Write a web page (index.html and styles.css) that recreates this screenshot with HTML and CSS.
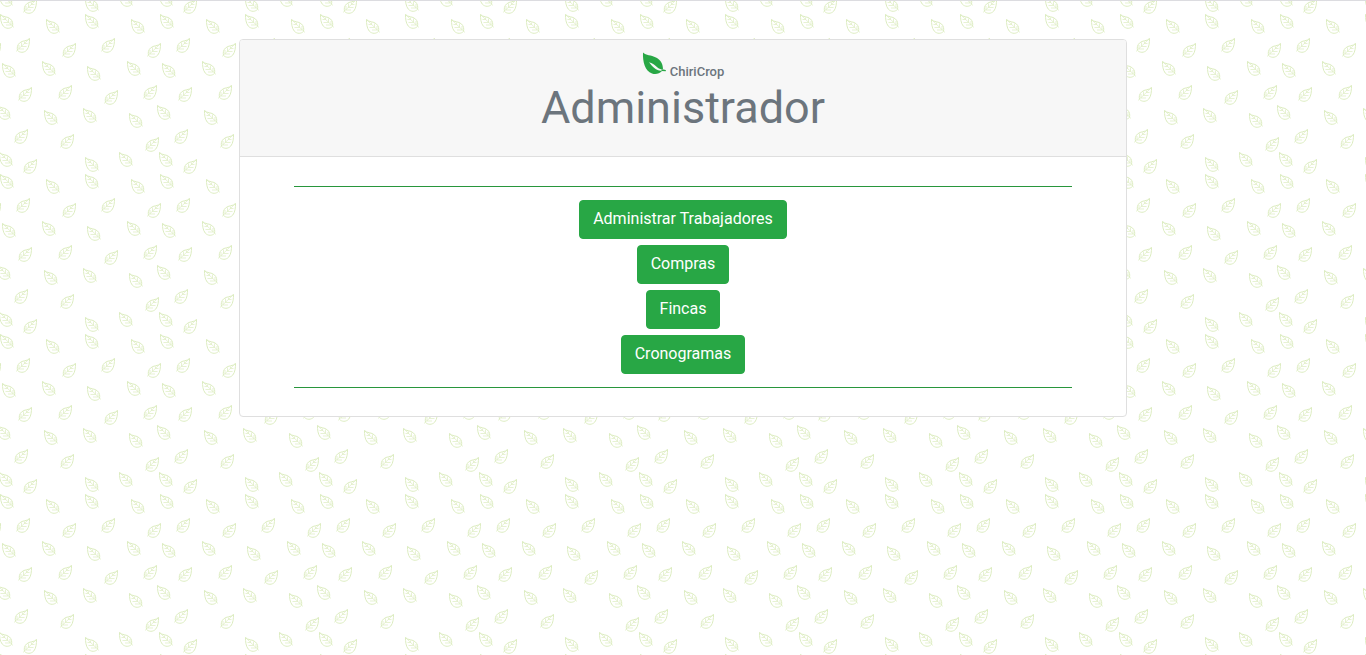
FILE: index.html
```html
<!DOCTYPE html>
<html lang="es">
<head>
<meta charset="utf-8">
<meta name="viewport" content="width=device-width, initial-scale=1">
<title>ChiriCrop</title>
<link rel="stylesheet" href="styles.css">
</head>
<body>
<main class="card">
  <header class="card-header">
    <div class="brand">
      <svg class="brand-leaf" viewBox="0 0 24 24" aria-hidden="true">
        <path fill="#28a745" d="M1 .5C4 3.500 9 3 14 5.500c5 2.500 7 6.500 7 12l2 .5v1l-3 0c-2.500 2.800-6.500 3.800-10 2.500C3 19 .5 9.500 1 .5z"/>
        <path fill="#f7f7f7" d="M7 10.200c4.200 1.200 6.200 3.300 8.500 5.200 1.800 1.500 3.500 2 6 2v1.600c-4 0-7-1.200-9.500-3.300C10 14 8.800 12.300 7 10.200z"/>
        <path fill="none" stroke="#28a745" stroke-width="1.400" d="M19.500 18.300l4.300.3"/>
      </svg>
      <span class="brand-name">ChiriCrop</span>
    </div>
    <h1 class="title">Administrador</h1>
  </header>
  <div class="card-body">
    <hr class="rule">
    <nav class="actions" aria-label="Administrador">
      <button class="btn" type="button">Administrar Trabajadores</button>
      <button class="btn" type="button">Compras</button>
      <button class="btn" type="button">Fincas</button>
      <button class="btn" type="button">Cronogramas</button>
    </nav>
    <hr class="rule">
  </div>
</main>
</body>
</html>
```
FILE: styles.css
```css
* { box-sizing: border-box; }

body {
  margin: 0;
  min-height: 100vh;
  padding-top: 38px;
  border-top: 1px solid #dcdce0;
  font-family: Roboto, "Liberation Sans", sans-serif;
  font-size: 16px;
  line-height: 24px;
  color: #6c757d;
  background-color: #fff;
  background-size: 160px 160px;
  background-image: url("data:image/svg+xml,%3Csvg xmlns='http://www.w3.org/2000/svg' xmlns:xlink='http://www.w3.org/1999/xlink' width='160' height='160' fill='none' stroke='%23dcecc0' stroke-width='1'%3E%3Cdefs%3E%3Cg id='a'%3E%3Cpath d='M.5.5C3 3.500 7.500 2 10.500 5c2.300 2.300 2.500 4.500 2 7.300C10.500 14.800 6 15.200 3.200 12 .8 9 .5 4.500.5.500z'/%3E%3Cpath stroke-width='.7' d='M.5.5L14 13.500M5.500 5.500v-2M8.500 8.500v-4M11 11v-4M5.500 5.500h-3M8.500 8.500h-5M11 11h-5'/%3E%3C/g%3E%3Cg id='b'%3E%3Cuse xlink:href='%23a' transform='matrix(-1 0 0 1 14 0)'/%3E%3C/g%3E%3C/defs%3E%3Cuse xlink:href='%23a' x='-1' y='152'/%3E%3Cuse xlink:href='%23a' x='-1' y='-8'/%3E%3Cuse xlink:href='%23a' x='159' y='152'/%3E%3Cuse xlink:href='%23a' y='14'/%3E%3Cuse xlink:href='%23a' x='46' y='19'/%3E%3Cuse xlink:href='%23a' x='85' y='14'/%3E%3Cuse xlink:href='%23a' x='131' y='19'/%3E%3Cuse xlink:href='%23a' x='85' y='157'/%3E%3Cuse xlink:href='%23a' x='85' y='-3'/%3E%3Cuse xlink:href='%23a' x='119' y='152'/%3E%3Cuse xlink:href='%23a' x='119' y='-8'/%3E%3Cuse xlink:href='%23a' x='2' y='63'/%3E%3Cuse xlink:href='%23a' x='42' y='61'/%3E%3Cuse xlink:href='%23a' x='87' y='66'/%3E%3Cuse xlink:href='%23a' x='127' y='61'/%3E%3Cuse xlink:href='%23a' x='-3' y='105'/%3E%3Cuse xlink:href='%23a' x='157' y='105'/%3E%3Cuse xlink:href='%23a' x='44' y='110'/%3E%3Cuse xlink:href='%23a' x='83' y='108'/%3E%3Cuse xlink:href='%23a' x='129' y='113'/%3E%3Cuse xlink:href='%23b' x='23' y='159'/%3E%3Cuse xlink:href='%23b' x='23' y='-1'/%3E%3Cuse xlink:href='%23b' x='16' y='38'/%3E%3Cuse xlink:href='%23b' x='62' y='43'/%3E%3Cuse xlink:href='%23b' x='101' y='38'/%3E%3Cuse xlink:href='%23b' x='147' y='43'/%3E%3Cuse xlink:href='%23b' x='-13' y='43'/%3E%3Cuse xlink:href='%23b' x='18' y='87'/%3E%3Cuse xlink:href='%23b' x='58' y='85'/%3E%3Cuse xlink:href='%23b' x='104' y='90'/%3E%3Cuse xlink:href='%23b' x='143' y='85'/%3E%3Cuse xlink:href='%23b' x='14' y='129'/%3E%3Cuse xlink:href='%23b' x='60' y='134'/%3E%3Cuse xlink:href='%23b' x='145' y='137'/%3E%3C/svg%3E");
}

.card {
  width: 65%;
  margin: 0 auto;
  background: #fff;
  border: 1px solid #dfdfdf;
  border-radius: 4px;
}

.card-header {
  padding: 12px 20px 21px;
  text-align: center;
  background: #f7f7f7;
  border-bottom: 1px solid #dfdfdf;
  border-radius: 3px 3px 0 0;
}

.brand {
  display: flex;
  justify-content: center;
  align-items: flex-end;
  gap: 4px;
  height: 28px;
}

.brand-leaf {
  width: 24px;
  height: 24px;
  align-self: flex-start;
}

.brand-name {
  font-size: 13px;
  font-weight: 500;
  line-height: 16px;
}

.title {
  margin: 1px 0 0;
  font-size: 45px;
  font-weight: 400;
  line-height: 54px;
}

.card-body { padding: 29px 54px 28px; }

.rule {
  height: 0;
  margin: 0;
  border: 0;
  border-top: 1px solid #28963c;
}

.actions {
  display: flex;
  flex-direction: column;
  align-items: center;
  gap: 6px;
  padding: 13px 0;
}

.btn {
  padding: 6px 13px 7px;
  border: 1px solid #28a745;
  border-radius: 4px;
  background: #28a745;
  color: #fff;
  font: inherit;
  cursor: pointer;
}

.btn:hover { background: #218838; }
```
